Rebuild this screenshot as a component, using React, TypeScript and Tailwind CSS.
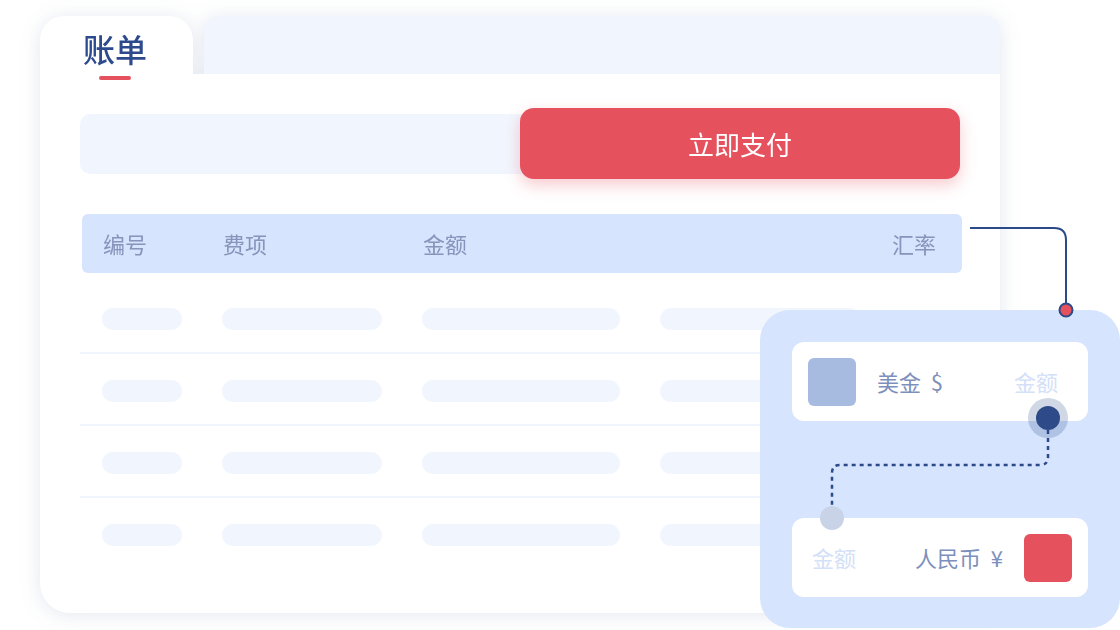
const cjk = { fontFamily: '"Noto Sans CJK SC", "Noto Sans", sans-serif' };

const rows = [0, 1, 2, 3];

export default function App() {
  return (
    <div className="relative w-[1120px] h-[630px] overflow-hidden bg-white" style={cjk}>
      {/* Bill card */}
      <div className="ml-[40px] pt-[16px] w-[960px] drop-shadow-[0_2px_10px_rgba(40,70,130,0.13)]">
        {/* Tabs */}
        <div className="flex h-[58px] gap-[11px]">
          <div className="relative z-10 w-[153px] h-[58px] rounded-t-[24px] bg-white pl-[43px] pt-[16px]">
            <div className="flex w-[64px] flex-col items-center">
              <span className="text-[32px] leading-[32px] font-medium text-[#2c4a8c] whitespace-nowrap">账单</span>
              <span className="mt-[12px] h-[4px] w-[32px] rounded-full bg-[#e5515d]"></span>
            </div>
          </div>
          <div className="flex-1 rounded-t-[14px] bg-[#f1f6fe]"></div>
        </div>

        {/* Body */}
        <div className="h-[539px] rounded-b-[30px] bg-white px-[40px] pt-[34px]">
          <div className="relative flex h-[71px] items-center">
            <div className="h-[60px] w-full rounded-[10px] bg-[#f1f6fe]"></div>
            <button className="absolute right-0 top-0 flex h-[71px] w-[440px] items-center justify-center rounded-[14px] bg-[#e5515d] text-[26px] text-white shadow-[0_6px_16px_rgba(229,81,93,0.3)]">
              立即支付
            </button>
          </div>

          {/* Table header */}
          <div className="ml-[2px] mt-[35px] flex h-[59px] w-[880px] items-center rounded-[6px] bg-[#d6e4fd] pl-[21px] pr-[26px] text-[22px] text-[#8794bb]">
            <span className="w-[120px]">编号</span>
            <span className="w-[200px]">费项</span>
            <span className="flex-1">金额</span>
            <span>汇率</span>
          </div>

          {/* Placeholder rows */}
          <div className="mt-[9px]">
            {rows.map((r) => (
              <div
                key={r}
                className={`flex gap-[40px] pl-[22px] pt-[26px] pb-[22px] ${r < 3 ? "border-b-2 border-[#f1f6fe]" : ""}`}
              >
                <div className="h-[22px] w-[80px] rounded-full bg-[#f1f6fe]"></div>
                <div className="h-[22px] w-[160px] rounded-full bg-[#f1f6fe]"></div>
                <div className="h-[22px] w-[198px] rounded-full bg-[#f1f6fe]"></div>
                <div className="h-[22px] w-[200px] rounded-full bg-[#f1f6fe]"></div>
              </div>
            ))}
          </div>
        </div>
      </div>

      {/* Exchange panel */}
      <div className="absolute left-[760px] top-[310px] flex h-[318px] w-[360px] flex-col justify-between rounded-[30px] bg-[#d6e4fd] p-[32px] pb-[31px]">
        <div className="flex h-[79px] items-center rounded-[12px] bg-white pl-[16px] pr-[30px]">
          <div className="h-[48px] w-[48px] rounded-[6px] bg-[#a7bae0]"></div>
          <span className="ml-[21px] flex-1 text-[22px] text-[#7d8fbd]">美金&nbsp;&nbsp;$</span>
          <span className="text-[22px] text-[#d3e0f8]">金额</span>
        </div>
        <div className="flex h-[79px] items-center rounded-[12px] bg-white pl-[20px] pr-[16px]">
          <span className="flex-1 text-[22px] text-[#d3e0f8]">金额</span>
          <span className="text-[22px] text-[#7d8fbd]">人民币&nbsp;&nbsp;¥</span>
          <div className="ml-[21px] h-[48px] w-[48px] rounded-[6px] bg-[#e5515d]"></div>
        </div>
      </div>

      {/* Connectors */}
      <svg className="pointer-events-none absolute left-0 top-0" width="1120" height="630" viewBox="0 0 1120 630">
        <path d="M970 228 H1054 Q1066 228 1066 240 V304" fill="none" stroke="#2b4a8a" strokeWidth="2" />
        <circle cx="1066" cy="310" r="6.5" fill="#e5515d" stroke="#2b4a8a" strokeWidth="2" />
        <path
          d="M1048 430 V457 Q1048 465 1040 465 H840 Q832 465 832 473 V506"
          fill="none"
          stroke="#2b4a8a"
          strokeWidth="2.5"
          strokeDasharray="4 4"
        />
        <circle cx="1048" cy="418" r="20" fill="rgba(43,74,138,0.22)" />
        <circle cx="1048" cy="418" r="12" fill="#2e4a88" />
        <circle cx="832" cy="518" r="12" fill="#c8d3e8" />
      </svg>
    </div>
  );
}
